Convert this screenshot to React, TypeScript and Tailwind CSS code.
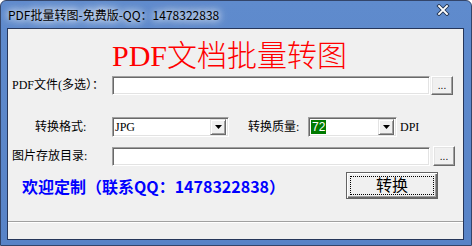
const cjk = "font-['Noto_Sans_CJK_SC',sans-serif]";
const lbl = "font-['Liberation_Serif','Noto_Sans_CJK_SC',serif] text-[12px] text-black leading-none";

function TextBox({ w }: { w: string }) {
  return (
    <div
      className={`${w} h-[19px] bg-white border border-t-[#a0a0a0] border-l-[#a0a0a0] border-r-white border-b-white shadow-[inset_1px_1px_0_#696969,inset_-1px_-1px_0_#e3e3e3]`}
    />
  );
}

function DotsButton({ extra }: { extra?: string }) {
  return (
    <div
      className={`w-[22px] h-[19px] bg-[#f0f0f0] border border-t-white border-l-white border-r-[#696969] border-b-[#696969] shadow-[inset_-1px_-1px_0_#a0a0a0,inset_1px_1px_0_#e3e3e3] flex items-end justify-center pb-[3px] ${extra ?? ""}`}
    >
      <span className="font-['Liberation_Sans',sans-serif] text-[10px] leading-none text-black tracking-[0px]">...</span>
    </div>
  );
}

function Combo({ w, children }: { w: string; children: React.ReactNode }) {
  return (
    <div
      className={`${w} h-[20px] bg-white border border-t-[#a0a0a0] border-l-[#a0a0a0] border-r-white border-b-white shadow-[inset_1px_1px_0_#696969,inset_-1px_-1px_0_#e3e3e3] flex items-center pl-[2px] pr-[2px]`}
    >
      <div className="flex-1 flex items-center">{children}</div>
      <div className="w-[16px] h-[16px] bg-[#f0f0f0] border border-t-[#e3e3e3] border-l-[#e3e3e3] border-r-[#696969] border-b-[#696969] shadow-[inset_1px_1px_0_#ffffff,inset_-1px_-1px_0_#a0a0a0] flex items-center justify-center">
        <svg width="7" height="4" viewBox="0 0 7 4">
          <path d="M0 0 H7 L3.5 4 Z" fill="#000" />
        </svg>
      </div>
    </div>
  );
}

export default function App() {
  return (
    <div className="w-[472px] h-[246px] bg-white overflow-hidden">
      <div className="w-[472px] h-[246px] flex flex-col rounded-t-[6px] border border-[#33456a] bg-gradient-to-b from-[#5f8bcd] to-[#5883c7]">
        {/* title bar */}
        <div className="h-[27px] flex items-center pl-[7px] relative">
          <span
            className={`${cjk} text-[12px] leading-none text-black [text-shadow:0_0_6px_rgba(255,255,255,0.95),0_0_10px_rgba(255,255,255,0.8),0_0_14px_rgba(255,255,255,0.6)]`}
          >
            PDF批量转图-免费版-QQ：1478322838
          </span>
          <svg className="absolute left-[435px] top-[3px]" width="14" height="12" viewBox="0 0 14 12">
            <path d="M3 2 L11 10 M11 2 L3 10" stroke="#233451" strokeWidth="3.6" strokeLinecap="square" />
            <path d="M3 2 L11 10 M11 2 L3 10" stroke="#ffffff" strokeWidth="1.8" strokeLinecap="square" />
          </svg>
        </div>

        {/* client area */}
        <div className="ml-[6px] mr-[7px] h-[212px] border border-[#26365a] bg-[#f0f0f0] flex flex-col">
          {/* big red title */}
          <div className="mt-[12px] h-[30px] pl-[104px] flex items-center">
            <span className="font-['Liberation_Serif','Noto_Sans_CJK_SC',serif] font-light text-[30px] leading-[30px] text-[#ff0000] whitespace-nowrap">
              PDF文档批量转图
            </span>
          </div>

          {/* row 1 */}
          <div className="mt-[4px] h-[20px] flex items-center">
            <div className={`w-[104px] pl-[4px] ${lbl}`}>PDF文件(多选）：</div>
            <TextBox w="w-[318px]" />
            <DotsButton extra="ml-[1px]" />
          </div>

          {/* row 2 */}
          <div className="mt-[22px] h-[20px] flex items-center">
            <div className={`w-[104px] pl-[27px] ${lbl}`}>转换格式:</div>
            <Combo w="w-[117px]">
              <span className="font-['Liberation_Serif',serif] text-[12px] leading-none text-black">JPG</span>
            </Combo>
            <div className={`ml-[19px] w-[60px] ${lbl}`}>转换质量:</div>
            <Combo w="w-[89px]">
              <span className="font-['Liberation_Sans',sans-serif] text-[12px] leading-[14px] text-white bg-[#007a00] px-[1px]">72</span>
            </Combo>
            <div className={`ml-[3px] ${lbl}`}>DPI</div>
          </div>

          {/* row 3 */}
          <div className="mt-[9px] h-[20px] flex items-center">
            <div className={`w-[104px] pl-[4px] ${lbl}`}>图片存放目录:</div>
            <TextBox w="w-[318px]" />
            <DotsButton extra="ml-[3px] h-[20px]" />
          </div>

          {/* row 4 */}
          <div className="mt-[6px] h-[27px] flex items-center">
            <div className="w-[338px] pl-[14px] pt-[3px]">
              <span className={`${cjk} font-bold text-[16px] leading-none text-[#0000ff] whitespace-nowrap`}>
                欢迎定制（联系QQ：1478322838）
              </span>
            </div>
            <div className="relative w-[92px] h-[27px] bg-[#f0f0f0] border border-[#646464] shadow-[inset_1px_1px_0_#ffffff,inset_-1px_-1px_0_#696969,inset_-2px_-2px_0_#a0a0a0] flex items-center justify-center">
              <span className={`${cjk} text-[16px] leading-none text-black -mt-[3px]`}>转换</span>
              <div className="absolute inset-[3px] border border-dotted border-black" />
            </div>
          </div>

          {/* status bar */}
          <div className="mt-[22px] flex-1 border-t border-[#a0a0a0] shadow-[inset_0_1px_0_#ffffff]" />
        </div>
      </div>
    </div>
  );
}
